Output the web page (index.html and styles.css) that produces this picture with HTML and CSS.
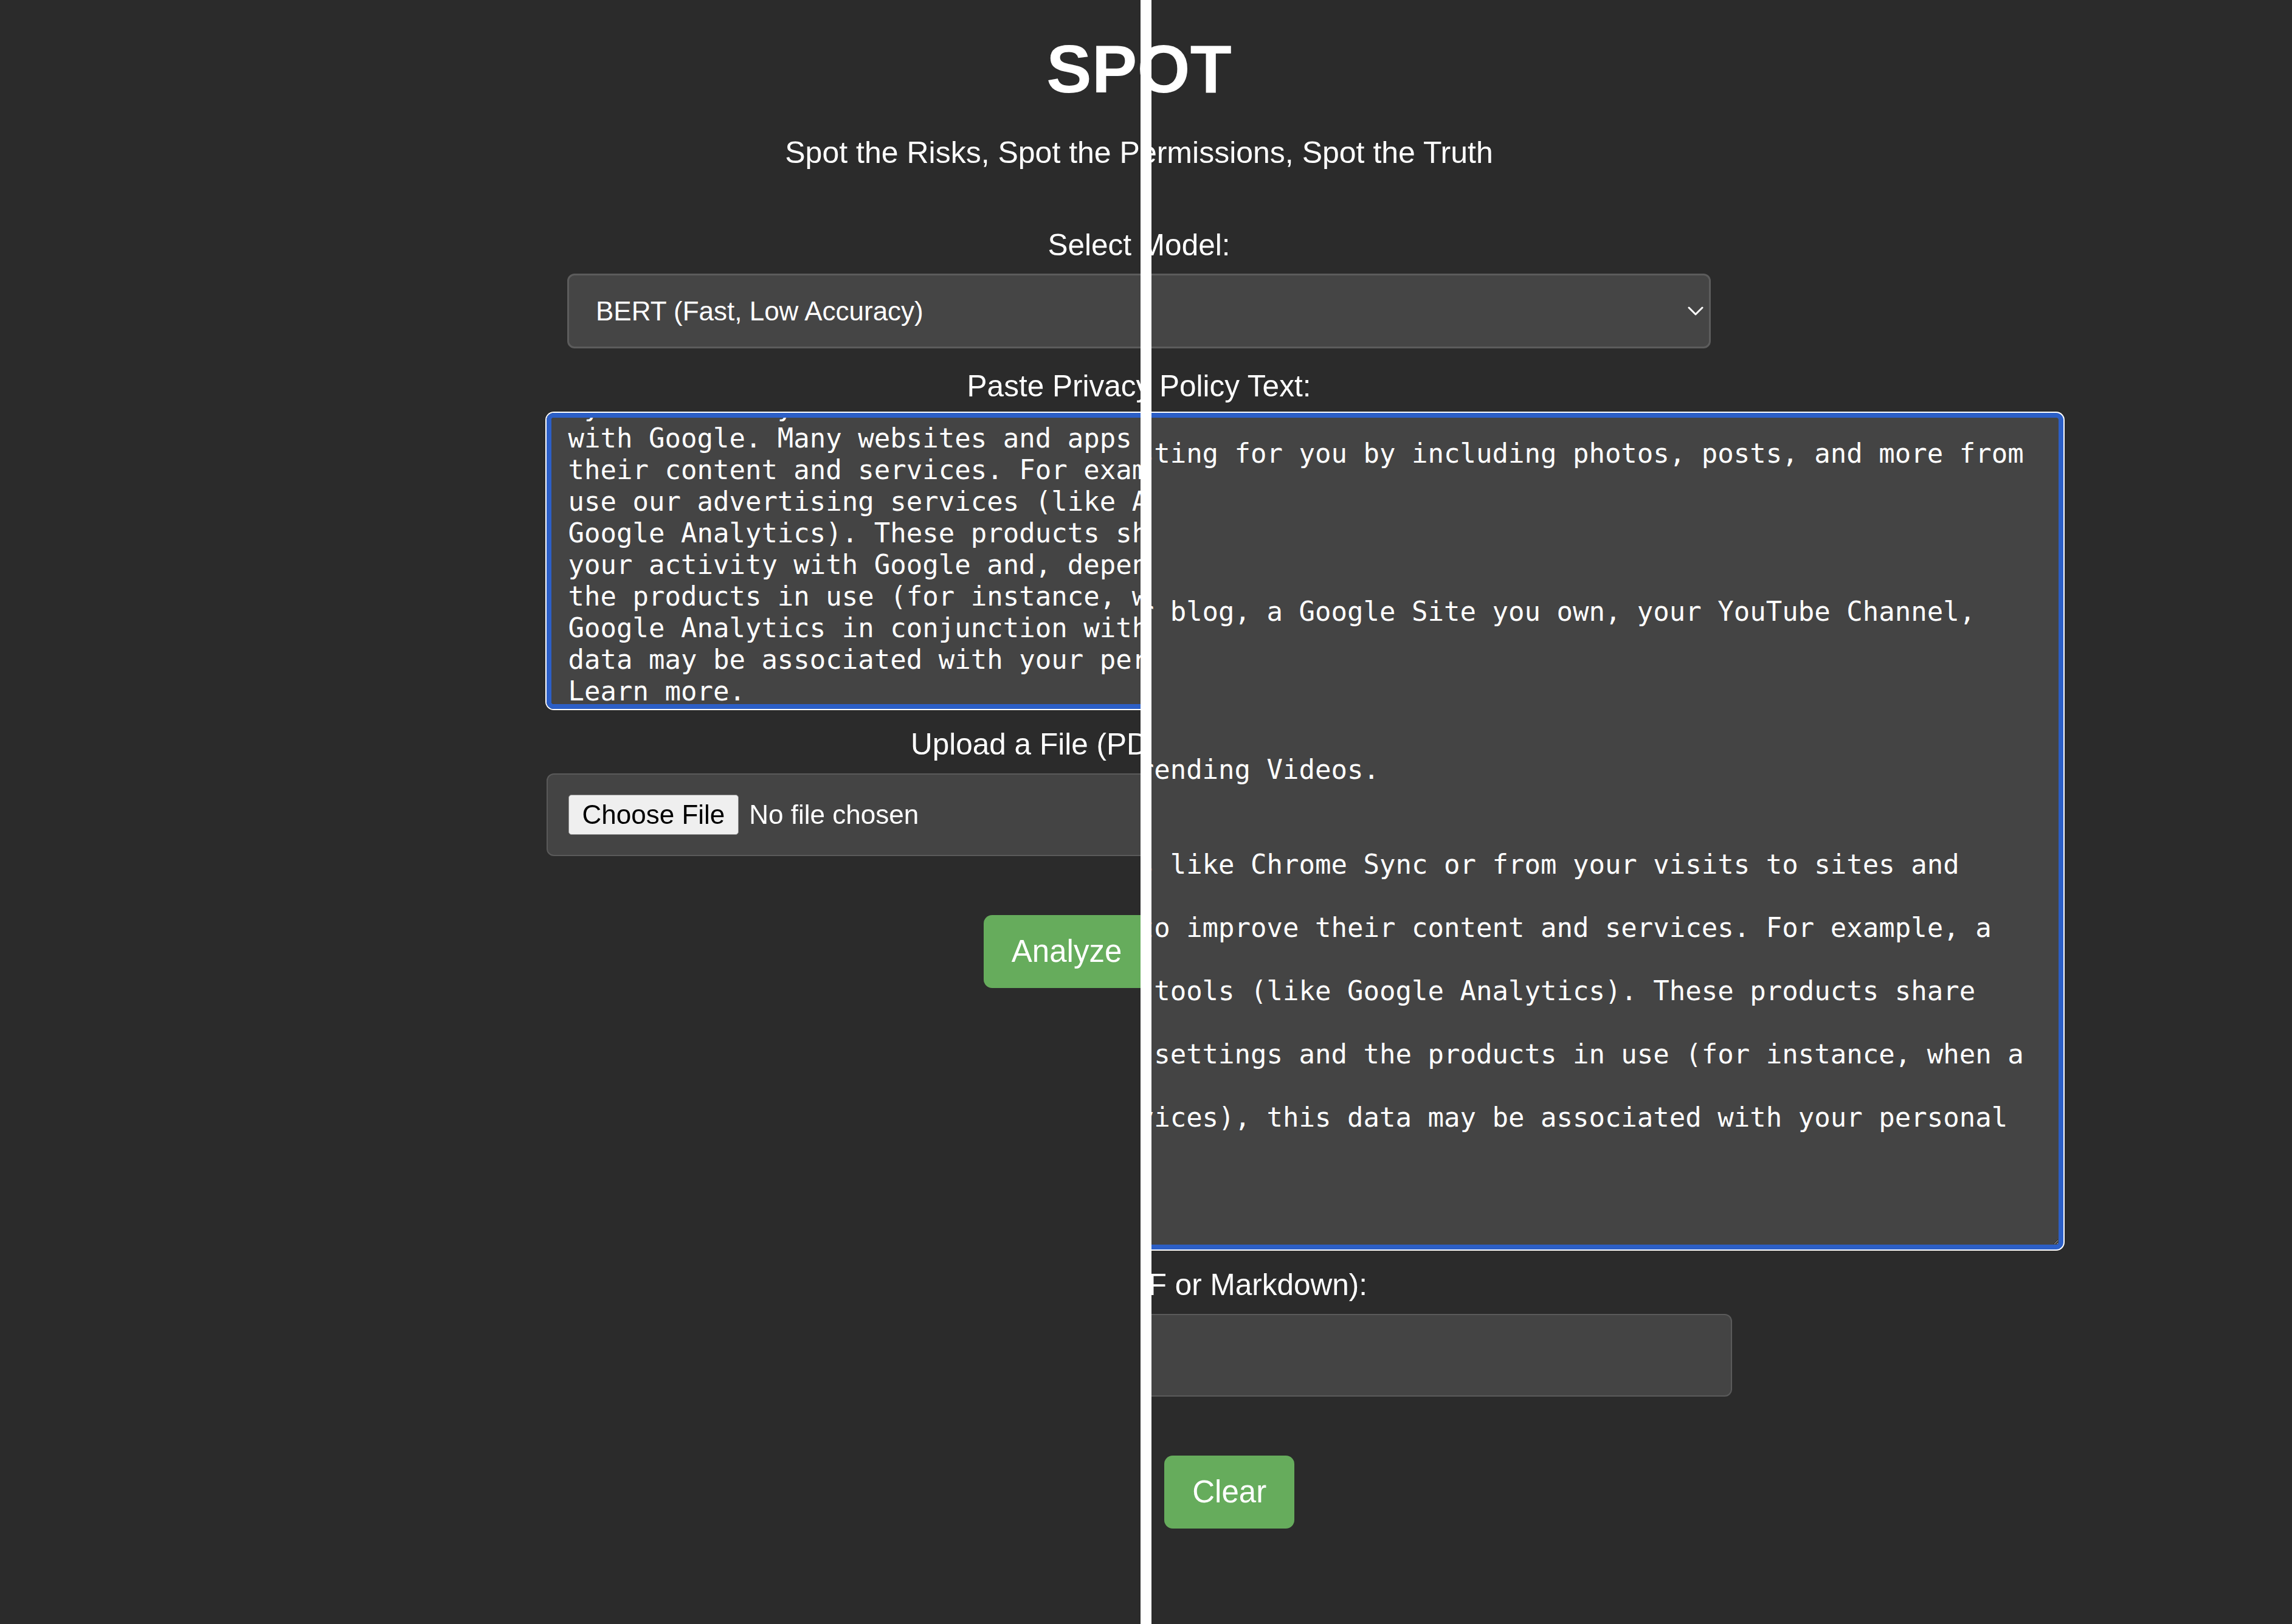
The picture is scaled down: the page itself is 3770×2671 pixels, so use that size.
FILE: index.html
```html
<!DOCTYPE html>
<html lang="en">
<head>
<meta charset="utf-8">
<title>SPOT</title>
<link rel="stylesheet" href="styles.css">
</head>
<body>
<div class="compare">
  <div class="pane pane-before">
    <main class="app">
      <h1 class="title">SPOT</h1>
      <p class="tagline">Spot the Risks, Spot the Permissions, Spot the Truth</p>
      <label class="field-label label-model" for="model-a">Select Model:</label>
      <div class="select-wrap">
        <select id="model-a" class="model-select">
          <option>BERT (Fast, Low Accuracy)</option>
        </select>
        <svg class="chevron" viewBox="0 0 26 16" width="26" height="16"><polyline points="2,2 13,13 24,2" fill="none" stroke="#ffffff" stroke-width="3" stroke-linecap="round" stroke-linejoin="round"/></svg>
      </div>
      <label class="field-label label-policy" for="policy-a">Paste Privacy Policy Text:</label>
      <textarea id="policy-a" class="policy policy-short" wrap="off" spellcheck="false">services like Chrome Sync or from your visits to
Sync or from your visits to sites and apps that partner
with Google. Many websites and apps partner with Google to improve
their content and services. For example, a website might
use our advertising services (like AdSense) or analytics tools (like
Google Analytics). These products share information about
your activity with Google and, depending on your account settings and
the products in use (for instance, when a partner uses
Google Analytics in conjunction with our advertising services), this
data may be associated with your personal information.
Learn more.</textarea>
      <label class="field-label label-upload" for="file-a">Upload a File (PDF or Markdown):</label>
      <div class="file-box">
        <input id="file-a" class="file-input" type="file">
      </div>
      <div class="actions">
        <button class="btn" type="button">Analyze</button>
        <button class="btn" type="button">Clear</button>
      </div>
    </main>
  </div>

  <div class="pane pane-after">
    <main class="app">
      <h1 class="title">SPOT</h1>
      <p class="tagline">Spot the Risks, Spot the Permissions, Spot the Truth</p>
      <label class="field-label label-model" for="model-b">Select Model:</label>
      <div class="select-wrap">
        <select id="model-b" class="model-select">
          <option>BERT (Fast, Low Accuracy)</option>
        </select>
        <svg class="chevron" viewBox="0 0 26 16" width="26" height="16"><polyline points="2,2 13,13 24,2" fill="none" stroke="#ffffff" stroke-width="3" stroke-linecap="round" stroke-linejoin="round"/></svg>
      </div>
      <label class="field-label label-policy" for="policy-b">Paste Privacy Policy Text:</label>
      <textarea id="policy-b" class="policy policy-tall" wrap="off" spellcheck="false">your results more useful and interesting for you by including photos, posts, and more from

your contacts.


like the content you publish on your blog, a Google Site you own, your YouTube Channel,




displayed to you, like in YouTube Trending Videos.


data we get from use of our services like Chrome Sync or from your visits to sites and

sites and apps partner with Google to improve their content and services. For example, a

website might use ads and analytics tools (like Google Analytics). These products share

Google and depending on the account settings and the products in use (for instance, when a

Analytics, with our advertising services), this data may be associated with your personal

information.</textarea>
      <label class="field-label label-upload" for="file-b">Upload a File (PDF or Markdown):</label>
      <div class="file-box">
        <input id="file-b" class="file-input" type="file">
      </div>
      <div class="actions">
        <button class="btn" type="button">Analyze</button>
        <button class="btn" type="button">Clear</button>
      </div>
    </main>
  </div>

  <div class="divider"></div>
</div>
<script src="script.js"></script>
</body>
</html>
```

FILE: styles.css
```css
html, body {
  margin: 0;
  padding: 0;
  background: #2b2b2b;
}

body {
  font-family: "Liberation Sans", Arial, Helvetica, sans-serif;
  color: #ffffff;
}

.compare {
  display: grid;
  width: 3770px;
  min-height: 2671px;
}

.pane {
  grid-area: 1 / 1;
  padding-right: 23px;
}

.pane-before {
  clip-path: inset(0 1894px 0 0);
}

.pane-after {
  clip-path: inset(0 0 0 1894px);
}

.divider {
  grid-area: 1 / 1;
  width: 18px;
  margin-left: 1876px;
  background: #ffffff;
}

.app {
  width: 1950px;
  margin: 0 auto;
  display: flex;
  flex-direction: column;
  align-items: center;
}

.title {
  margin: 50px 0 0;
  font-size: 112px;
  font-weight: bold;
  line-height: 1.15;
  text-align: center;
}

.tagline {
  margin: 44.6px 0 0;
  font-size: 50px;
  line-height: 1.15;
  text-align: center;
}

.field-label {
  display: block;
  font-size: 49.5px;
  line-height: 1.15;
  text-align: center;
}

.label-model {
  margin: 94px 0 17.7px;
}

.label-policy {
  margin: 34.4px 0 14.7px;
}

.label-upload {
  margin: 30.4px 0 18.7px;
}

.select-wrap {
  position: relative;
  width: 1881px;
  height: 123px;
}

.model-select {
  appearance: none;
  -webkit-appearance: none;
  box-sizing: border-box;
  width: 100%;
  height: 100%;
  margin: 0;
  padding: 0 0 0 44px;
  background: #454545;
  border: 3px solid #5c5c5c;
  border-radius: 12px;
  color: #ffffff;
  font-family: "Liberation Sans", Arial, sans-serif;
  font-size: 44px;
  outline: none;
}

.chevron {
  position: absolute;
  right: 12px;
  top: 54px;
  pointer-events: none;
}

.policy {
  align-self: flex-start;
  box-sizing: border-box;
  margin: 0;
  background: #444444;
  color: #ffffff;
  border: 8px solid #2c5fc7;
  border-radius: 12px;
  box-shadow: 0 0 0 2px #ffffff;
  outline: none;
  font-family: "DejaVu Sans Mono", monospace;
  font-size: 44px;
  line-height: 52px;
  white-space: pre;
  overflow: auto;
  resize: both;
  scrollbar-width: none;
}

.policy::-webkit-scrollbar {
  width: 0;
  height: 0;
}

.policy-short {
  width: 1950px;
  height: 487px;
  padding: 33px 28px 30px;
}

.policy-tall {
  width: 2495px;
  height: 1376px;
  padding: 33px 26px 30px 38px;
}

.file-box {
  box-sizing: border-box;
  width: 100%;
  height: 136px;
  display: flex;
  align-items: center;
  padding: 0 34px;
  background: #444444;
  border: 2px solid #5a5a5a;
  border-radius: 12px;
}

.file-input {
  width: 100%;
  color: #ffffff;
  font-family: "Liberation Sans", Arial, sans-serif;
  font-size: 44px;
}

.file-input::file-selector-button {
  height: 66px;
  margin-right: 17px;
  padding: 0 22px;
  background: #efefef;
  color: #000000;
  border: 1px solid #8f8f8f;
  border-radius: 5px;
  font-family: "Liberation Sans", Arial, sans-serif;
  font-size: 44px;
}

.actions {
  display: flex;
  justify-content: center;
  gap: 24px;
  margin-top: 97px;
}

.btn {
  height: 120px;
  padding: 0 46px;
  background: #66ac5c;
  color: #ffffff;
  border: none;
  border-radius: 14px;
  font-family: "Liberation Sans", Arial, sans-serif;
  font-size: 51px;
}
```

FILE: script.js
```js
var shortArea = document.getElementById('policy-a');
if (shortArea) {
  shortArea.scrollTop = 129;
}
```
